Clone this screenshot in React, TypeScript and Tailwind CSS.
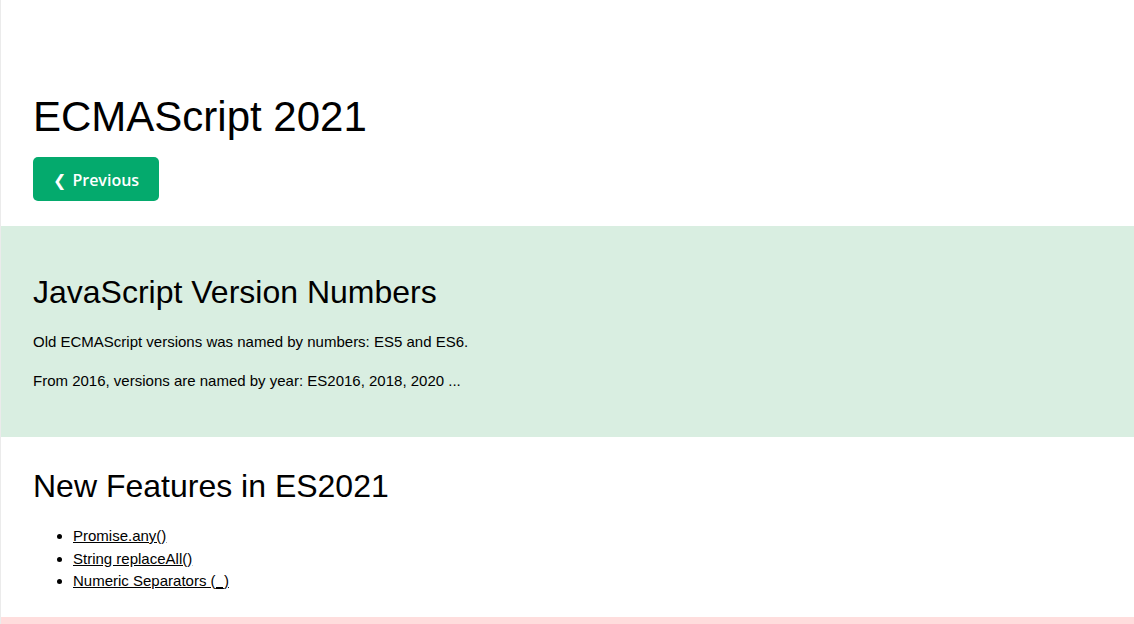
const features = ['Promise.any()', 'String replaceAll()', 'Numeric Separators (_)'];

export default function App() {
  return (
    <div className="min-h-[624px] border-l border-[#ebebeb] bg-white text-black font-['Liberation_Sans',Arial,sans-serif] overflow-hidden">
      <div className="px-[32px] pt-[93px]">
        <h1 className="text-[42px] leading-[48px] font-normal">ECMAScript 2021</h1>
        <div className="mt-[16px]">
          <a
            href="#"
            className="inline-flex h-[44px] items-center rounded-[5px] bg-[#04AA6D] px-[20px] pt-[2px] text-[16px] font-semibold text-white font-['Open_Sans','DejaVu_Sans',sans-serif]"
          >
            <span className="mr-[6px]">❮</span>Previous
          </a>
        </div>
      </div>

      <div className="mt-[25px] bg-[#D9EEE1] px-[32px] pt-[48px] pb-[45px]">
        <h2 className="text-[32px] leading-[37px] font-normal">JavaScript Version Numbers</h2>
        <p className="mt-[19px] text-[15px] leading-[23px]">Old ECMAScript versions was named by numbers: ES5 and ES6.</p>
        <p className="mt-[16px] text-[15px] leading-[23px]">From 2016, versions are named by year: ES2016, 2018, 2020 ...</p>
      </div>

      <div className="px-[32px] pt-[31px] pb-[24px]">
        <h2 className="text-[32px] leading-[37px] font-normal">New Features in ES2021</h2>
        <ul className="mt-[20px] list-disc pl-[40px] text-[15px] leading-[22.5px]">
          {features.map((f) => (
            <li key={f}>
              <a href="#" className="underline">{f}</a>
            </li>
          ))}
        </ul>
      </div>

      <div className="h-[60px] bg-[#ffdddd]" />
    </div>
  );
}
